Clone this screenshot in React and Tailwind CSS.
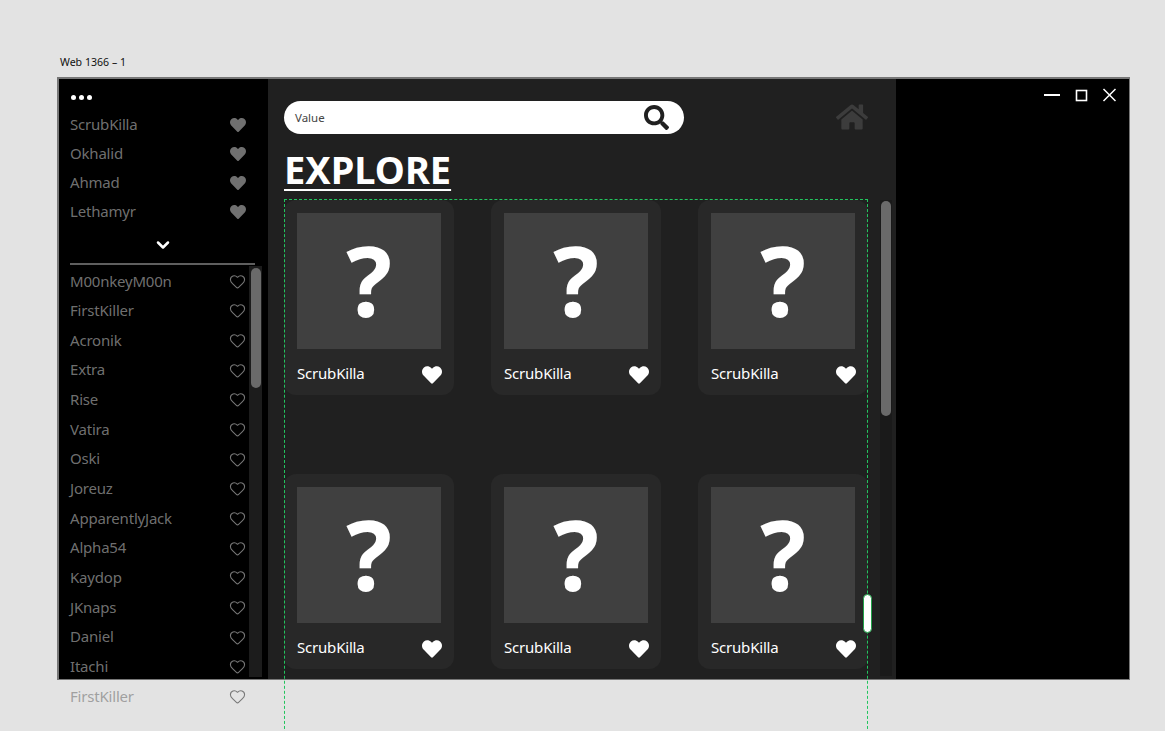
import React from 'react';
import { FaHeart, FaHome, FaSearch } from 'react-icons/fa';
import { ChevronDown, Heart } from 'lucide-react';

const favourites = ['ScrubKilla', 'Okhalid', 'Ahmad', 'Lethamyr'];
const players = [
  'M00nkeyM00n', 'FirstKiller', 'Acronik', 'Extra', 'Rise', 'Vatira', 'Oski', 'Joreuz',
  'ApparentlyJack', 'Alpha54', 'Kaydop', 'JKnaps', 'Daniel', 'Itachi', 'FirstKiller',
];

const FavouriteRow = ({ name }) => (
  <div className="flex h-[29px] items-center justify-between pr-[22px] text-[15px] tracking-[-0.2px] text-[#8e8e8e]/80">
    <span>{name}</span>
    <FaHeart className="h-[16px] w-[16px] text-[#707070]" />
  </div>
);

const PlayerRow = ({ name }) => (
  <div className="flex h-[29.65px] shrink-0 items-center justify-between pr-[3px] text-[15px] tracking-[-0.2px] text-[#8e8e8e]/80">
    <span>{name}</span>
    <Heart className="mt-[1px] h-[17px] w-[17px] text-[#777777]" strokeWidth={1.5} />
  </div>
);

const Card = () => (
  <div className="h-[195px] rounded-xl bg-[#282828] px-[13px] pt-[13px]">
    <div className="flex h-[136px] w-[144px] items-center justify-center bg-[#404040] pb-[2px] text-[96px] font-bold leading-none text-white">
      ?
    </div>
    <div className="mt-[12px] flex items-center justify-between text-[15px] tracking-[-0.2px] text-white">
      <span>ScrubKilla</span>
      <FaHeart className="-mr-[1px] mt-[4px] h-[20px] w-[20px]" />
    </div>
  </div>
);

const App = () => (
  <div
    className="relative h-[731px] w-[1165px] overflow-hidden bg-[#e3e3e3] pl-[57px] pt-[55px]"
    style={{ fontFamily: '"Noto Sans", sans-serif' }}
  >
    <div className="h-[14px] pl-[3px] text-[10.6px] leading-[14px] text-[#111111]">Web 1366 – 1</div>
    <div className="mt-[8px] flex h-[603px] w-[1073px] border border-l-2 border-t-2 border-[#777777] bg-black">
      {/* Sidebar */}
      <aside className="w-[209px] shrink-0 pl-[11px] pt-[13px]">
        <div className="flex h-[10px] items-center gap-[3px] pl-[1px]">
          <span className="h-[5px] w-[5px] rounded-full bg-white" />
          <span className="h-[5px] w-[5px] rounded-full bg-white" />
          <span className="h-[5px] w-[5px] rounded-full bg-white" />
        </div>
        <div className="mt-[8px]">
          {favourites.map((name) => (
            <FavouriteRow key={name} name={name} />
          ))}
        </div>
        <div className="mt-[6px] flex h-[26px] w-[185px] items-center justify-center">
          <ChevronDown className="h-[20px] w-[20px] text-white" strokeWidth={3} />
        </div>
        <div className="mt-[5px] h-[2px] w-[185px] bg-[#5f5f5f]" />
        <div className="mt-[1px] flex h-[411px] items-start">
          <div className="flex h-[411px] w-[179px] shrink-0 flex-col">
            {players.map((name, i) => (
              <PlayerRow key={i} name={name} />
            ))}
          </div>
          <div className="h-[411px] w-[13px] bg-[#1c1c1c] px-[1.5px] pt-[2px]">
            <div className="h-[120px] rounded-full bg-[#6a6a6a]" />
          </div>
        </div>
      </aside>

      {/* Main */}
      <main className="h-full w-[628px] shrink-0 bg-[#202020] pl-[16px] pt-[21px]">
        <div className="flex h-[34px] w-[584px] items-center justify-between">
          <div className="flex h-[33px] w-[400px] items-center justify-between rounded-full bg-white pl-[11px] pr-[15px]">
            <span className="mt-[1px] text-[11.5px] text-[#444444]">Value</span>
            <FaSearch className="h-[25px] w-[25px] text-[#202020]" />
          </div>
          <FaHome className="h-[32px] w-[32px] text-[#3c3c3c]" />
        </div>
        <h1 className="mt-[11px] h-[55px] text-[38px] font-bold leading-[48px] text-white underline decoration-2 underline-offset-[5px]">
          EXPLORE
        </h1>
        <div className="flex items-start">
          <div className="grid w-[583px] grid-cols-[170px_170px_170px] gap-x-[37px] gap-y-[79px]">
            {[...Array(6)].map((_, i) => (
              <Card key={i} />
            ))}
          </div>
          <div className="ml-[13px] h-[476px] w-[12px] bg-[#1a1a1a] px-[1px] pt-[1px]">
            <div className="h-[215px] rounded-full bg-[#6a6a6a]" />
          </div>
        </div>
      </main>

      <div className="flex-1 bg-black" />
    </div>

    {/* Window controls */}
    <div className="absolute left-[1044px] top-[88px] flex h-[14px] items-center gap-[14px]">
      <svg width="16" height="14" viewBox="0 0 16 14">
        <rect x="0" y="6" width="16" height="2" fill="white" />
      </svg>
      <svg width="14" height="14" viewBox="0 0 14 14" fill="none">
        <rect x="2.5" y="2.5" width="10" height="10" stroke="white" strokeWidth="1.6" />
      </svg>
      <svg width="14" height="14" viewBox="0 0 14 14" fill="none">
        <path d="M1.5 1 L13.5 13 M13.5 1 L1.5 13" stroke="white" strokeWidth="1.5" />
      </svg>
    </div>

    {/* Selection guides */}
    <div className="pointer-events-none absolute left-[284px] top-[199px] h-[540px] w-[584px] border border-b-0 border-dashed border-[#22c55e]" />
    <div className="absolute left-[863px] top-[594px] h-[39px] w-[9px] rounded-full border border-[#22a34a] bg-white" />
  </div>
);

export default App;
